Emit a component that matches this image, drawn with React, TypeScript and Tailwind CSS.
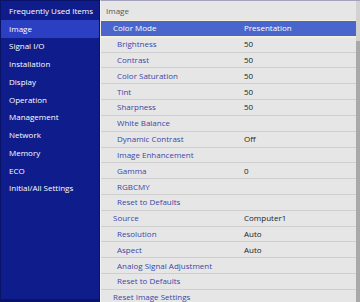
const sideItems = [
  'Frequently Used Items',
  'Image',
  'Signal I/O',
  'Installation',
  'Display',
  'Operation',
  'Management',
  'Network',
  'Memory',
  'ECO',
  'Initial/All Settings',
];

type Row = { label: string; value?: string; sub?: boolean; active?: boolean };

const rows: Row[] = [
  { label: 'Color Mode', value: 'Presentation', active: true },
  { label: 'Brightness', value: '50', sub: true },
  { label: 'Contrast', value: '50', sub: true },
  { label: 'Color Saturation', value: '50', sub: true },
  { label: 'Tint', value: '50', sub: true },
  { label: 'Sharpness', value: '50', sub: true },
  { label: 'White Balance', sub: true },
  { label: 'Dynamic Contrast', value: 'Off', sub: true },
  { label: 'Image Enhancement', sub: true },
  { label: 'Gamma', value: '0', sub: true },
  { label: 'RGBCMY', sub: true },
  { label: 'Reset to Defaults', sub: true },
  { label: 'Source', value: 'Computer1' },
  { label: 'Resolution', value: 'Auto', sub: true },
  { label: 'Aspect', value: 'Auto', sub: true },
  { label: 'Analog Signal Adjustment', sub: true },
  { label: 'Reset to Defaults', sub: true },
  { label: 'Reset Image Settings' },
];

export default function App() {
  return (
    <div
      className="flex w-[360px] h-[302px] overflow-hidden bg-[#e6e6e6] text-[8px] leading-none"
      style={{ fontFamily: '"Open Sans", "Noto Sans", sans-serif' }}
    >
      {/* Left menu */}
      <div className="w-[100px] shrink-0 bg-[#0f1c8c] border border-[#0a1466] border-b-[3px] pt-px">
        {sideItems.map((item) => (
          <div
            key={item}
            className={`h-[17.75px] flex items-center pl-2 text-white ${
              item === 'Image' ? 'bg-[#2b3fc2]' : ''
            }`}
          >
            {item}
          </div>
        ))}
      </div>

      {/* Right panel */}
      <div className="flex-1 flex border-l border-[#f4f4f4] border-t border-t-[#a3a3bd]">
        <div className="flex-1 flex flex-col">
          <div className="h-[20px] shrink-0 flex items-center pl-[5px] text-[#555] border-b border-[#d0d0d0]">
            Image
          </div>
          {rows.map((row, i) => (
            <div
              key={i}
              className={`h-[15.82px] shrink-0 flex items-center border-b ${
                row.active
                  ? 'bg-[#4a66cc] border-[#f2f0d8] outline outline-1 outline-[#f2f0d8] text-white'
                  : 'border-[#cfcfcf] text-[#3a47a6]'
              }`}
            >
              <span className={`w-[143px] ${row.sub ? 'pl-[16px]' : 'pl-[12px]'}`}>
                {row.label}
              </span>
              <span className={row.active ? 'text-white' : 'text-[#222]'}>{row.value}</span>
            </div>
          ))}
        </div>
        <div className="w-[4px] shrink-0 bg-[#d2d2d2] flex flex-col">
          <div className="h-[40px]" />
          <div className="flex-1 bg-[#a9a9a9]" />
        </div>
      </div>
    </div>
  );
}
